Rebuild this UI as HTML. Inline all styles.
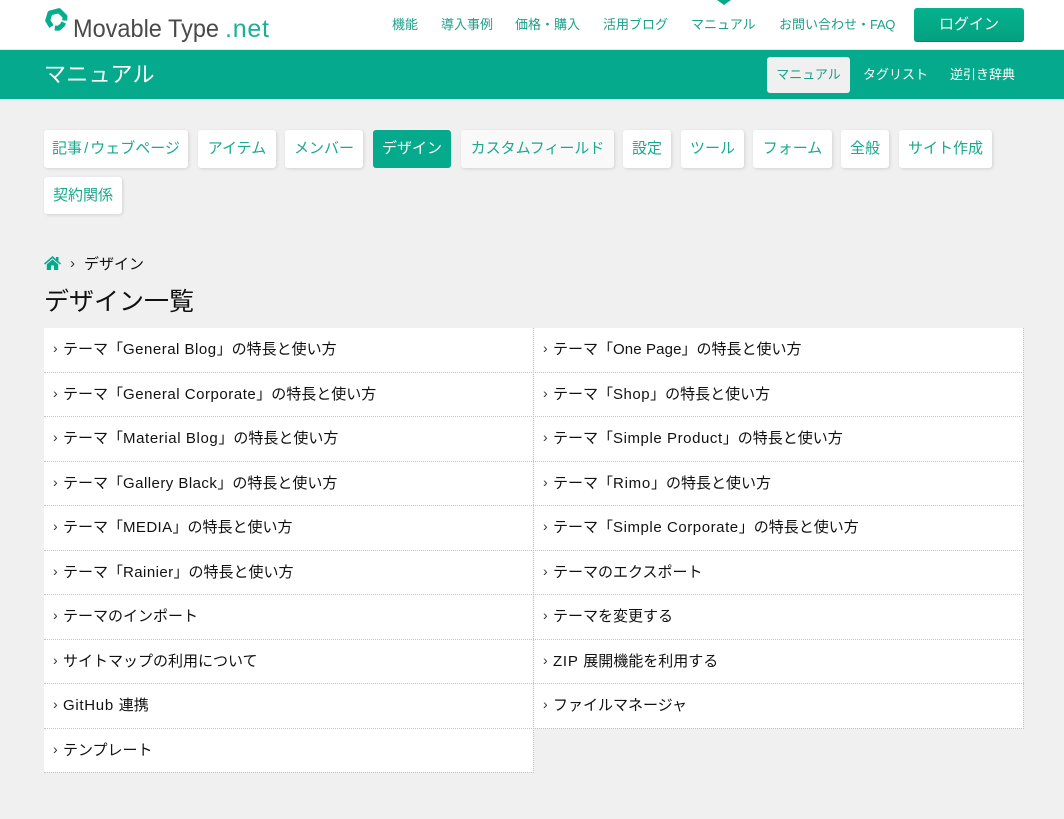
<!DOCTYPE html>
<html lang="ja">
<head>
<meta charset="utf-8">
<title>デザイン一覧</title>
<style>
html,body{margin:0;padding:0}
body{width:1064px;height:819px;overflow:hidden;position:relative;background:#f0f0f0;color:#111;font-family:"Liberation Sans","Noto Sans CJK JP",sans-serif;}
a,div,span{position:absolute;white-space:nowrap;text-decoration:none}
.hd{left:0;top:0;width:1064px;height:49px;background:#fff;border-bottom:1px solid #e8e8e8}
.bar{left:0;top:50px;width:1064px;height:49px;background:#05a98c}
.nav{top:15px;font-size:13px;line-height:19px;color:#1d9f89}
.login{left:914px;top:8px;width:110px;height:34px;box-sizing:border-box;border-radius:3px;background:linear-gradient(#05b28f,#03a17f);border-bottom:1px solid #028a6d;color:#fff;font-size:15px;line-height:34px;text-align:center}
.ttl{left:44px;top:59px;font-size:22px;line-height:32px;letter-spacing:.3px;color:#fff}
.sub{top:64px;font-size:13px;line-height:21px;color:#fff}
.act{left:767px;top:57px;width:83px;height:36px;background:#f0f0f0;border-radius:3px;color:#1d9f89;font-size:13px;line-height:35px;text-align:center}
.tab{box-sizing:border-box;height:38px;top:130px;background:#fff;border-radius:3px;box-shadow:1px 1px 3px rgba(0,0,0,.12);color:#1aa88f;font-size:15px;line-height:37px;text-align:center}
.crumb{left:84px;top:255px;font-size:15px;line-height:20px}
.sep{left:70px;top:254px;font-size:15px;line-height:20px;color:#333}
h1{position:absolute;margin:0;left:44px;top:286px;font-size:25px;line-height:32px;font-weight:400;white-space:nowrap;color:#111}
.wl{background:#fff}
.h{height:0;border-top:1px dotted #c4c4c4}
.v{width:0;border-left:1px dotted #c4c4c4}
.t{font-size:15px;line-height:20px;color:#111}
.t i{font-style:normal;position:absolute;left:-10px;top:-2px;color:#333;font-size:14px}
.t b{font-weight:400}
</style>
</head>
<body>
<div class="hd"></div>
<svg style="position:absolute;left:44px;top:7px" width="26" height="26" viewBox="0 0 26 26">
<g fill="none" stroke="#07ad8f" stroke-width="5" stroke-linejoin="round">
<path d="M7.5 19.5L3.7 13.5L6 6L15 3.7L21 9.5L20.7 13.6"/>
<path d="M19.8 15.5L18.5 18L14.5 21.3L10.8 21"/>
</g>
</svg>
<svg style="position:absolute;left:73px;top:10px" width="200" height="36" viewBox="0 0 200 36">
<text x="0" y="27" font-family="Liberation Sans, sans-serif" font-size="25" fill="#4a4a4a" textLength="146" lengthAdjust="spacingAndGlyphs">Movable Type</text>
<text x="152" y="27" font-family="Liberation Sans, sans-serif" font-size="25" fill="#1ab096" textLength="44" lengthAdjust="spacing">.net</text>
</svg>
<a class="nav" style="left:392px">機能</a>
<a class="nav" style="left:441px">導入事例</a>
<a class="nav" style="left:515px">価格・購入</a>
<a class="nav" style="left:603px">活用ブログ</a>
<a class="nav" style="left:691px">マニュアル</a>
<a class="nav" style="left:779px">お問い合わせ・<b style="font-weight:400;letter-spacing:-.3px">FAQ</b></a>
<svg style="position:absolute;left:717px;top:0" width="14" height="5"><path d="M0 0H14L7 5Z" fill="#05a98c"/></svg>
<a class="login">ログイン</a>
<div class="bar"></div>
<div class="ttl">マニュアル</div>
<a class="act">マニュアル</a>
<a class="sub" style="left:863px">タグリスト</a>
<a class="sub" style="left:950px">逆引き辞典</a>

<a class="tab" style="left:44px;width:144px">記事<b style="font-weight:400;margin:0 2px">/</b>ウェブページ</a>
<a class="tab" style="left:198px;width:78px">アイテム</a>
<a class="tab" style="left:285px;width:78px">メンバー</a>
<a class="tab" style="left:373px;width:78px;background:#05a98c;color:#fff;box-shadow:none">デザイン</a>
<a class="tab" style="left:461px;width:153px;background:#f9f9f9">カスタムフィールド</a>
<a class="tab" style="left:623px;width:48px">設定</a>
<a class="tab" style="left:681px;width:63px">ツール</a>
<a class="tab" style="left:753px;width:79px">フォーム</a>
<a class="tab" style="left:841px;width:48px">全般</a>
<a class="tab" style="left:899px;width:93px">サイト作成</a>
<a class="tab" style="left:44px;top:177px;width:78px;height:37px">契約関係</a>

<svg style="position:absolute;left:44px;top:256px" width="17" height="14" viewBox="0 0 17 14">
<path d="M8.5 0L12 3V1H14.5V5.2L17 7.5L16 8.6L8.5 2.2L1 8.6L0 7.5Z M8.5 3.4L14.2 8.3V14H10V9.5H7V14H2.8V8.3Z" fill="#07a98c"/>
</svg>
<span class="sep">›</span>
<span class="crumb">デザイン</span>
<h1>デザイン一覧</h1>

<div class="wl" style="left:44px;top:328px;width:489px;height:444px"></div>
<div class="wl" style="left:534px;top:328px;width:489px;height:400px"></div>
<div class="h" style="left:44px;top:372px;width:980px"></div>
<div class="h" style="left:44px;top:416px;width:980px"></div>
<div class="h" style="left:44px;top:461px;width:980px"></div>
<div class="h" style="left:44px;top:505px;width:980px"></div>
<div class="h" style="left:44px;top:550px;width:980px"></div>
<div class="h" style="left:44px;top:594px;width:980px"></div>
<div class="h" style="left:44px;top:639px;width:980px"></div>
<div class="h" style="left:44px;top:683px;width:980px"></div>
<div class="h" style="left:44px;top:728px;width:980px"></div>
<div class="h" style="left:44px;top:772px;width:490px"></div>
<div class="v" style="left:533px;top:328px;height:445px"></div>
<div class="v" style="left:1023px;top:328px;height:401px"></div>

<a class="t" style="left:63px;top:340px"><i>›</i>テーマ「<b style="letter-spacing:.5px">General Blog</b>」の特長と使い方</a>
<a class="t" style="left:63px;top:385px"><i>›</i>テーマ「<b style="letter-spacing:.53px">General Corporate</b>」の特長と使い方</a>
<a class="t" style="left:63px;top:429px"><i>›</i>テーマ「<b style="letter-spacing:.6px">Material Blog</b>」の特長と使い方</a>
<a class="t" style="left:63px;top:474px"><i>›</i>テーマ「<b style="letter-spacing:.46px">Gallery Black</b>」の特長と使い方</a>
<a class="t" style="left:63px;top:518px"><i>›</i>テーマ「<b style="letter-spacing:.4px">MEDIA</b>」の特長と使い方</a>
<a class="t" style="left:63px;top:563px"><i>›</i>テーマ「<b style="letter-spacing:.43px">Rainier</b>」の特長と使い方</a>
<a class="t" style="left:63px;top:607px"><i>›</i>テーマのインポート</a>
<a class="t" style="left:63px;top:652px"><i>›</i>サイトマップの利用について</a>
<a class="t" style="left:63px;top:696px"><i>›</i><b style="letter-spacing:.7px">GitHub </b>連携</a>
<a class="t" style="left:63px;top:741px"><i>›</i>テンプレート</a>

<a class="t" style="left:553px;top:340px"><i>›</i>テーマ「<b style="letter-spacing:.12px">One Page</b>」の特長と使い方</a>
<a class="t" style="left:553px;top:385px"><i>›</i>テーマ「<b style="letter-spacing:.5px">Shop</b>」の特長と使い方</a>
<a class="t" style="left:553px;top:429px"><i>›</i>テーマ「<b style="letter-spacing:.57px">Simple Product</b>」の特長と使い方</a>
<a class="t" style="left:553px;top:474px"><i>›</i>テーマ「<b style="letter-spacing:.75px">Rimo</b>」の特長と使い方</a>
<a class="t" style="left:553px;top:518px"><i>›</i>テーマ「<b style="letter-spacing:.56px">Simple Corporate</b>」の特長と使い方</a>
<a class="t" style="left:553px;top:563px"><i>›</i>テーマのエクスポート</a>
<a class="t" style="left:553px;top:607px"><i>›</i>テーマを変更する</a>
<a class="t" style="left:553px;top:652px"><i>›</i><b style="letter-spacing:.75px">ZIP </b>展開機能を利用する</a>
<a class="t" style="left:553px;top:696px"><i>›</i>ファイルマネージャ</a>
</body>
</html>
